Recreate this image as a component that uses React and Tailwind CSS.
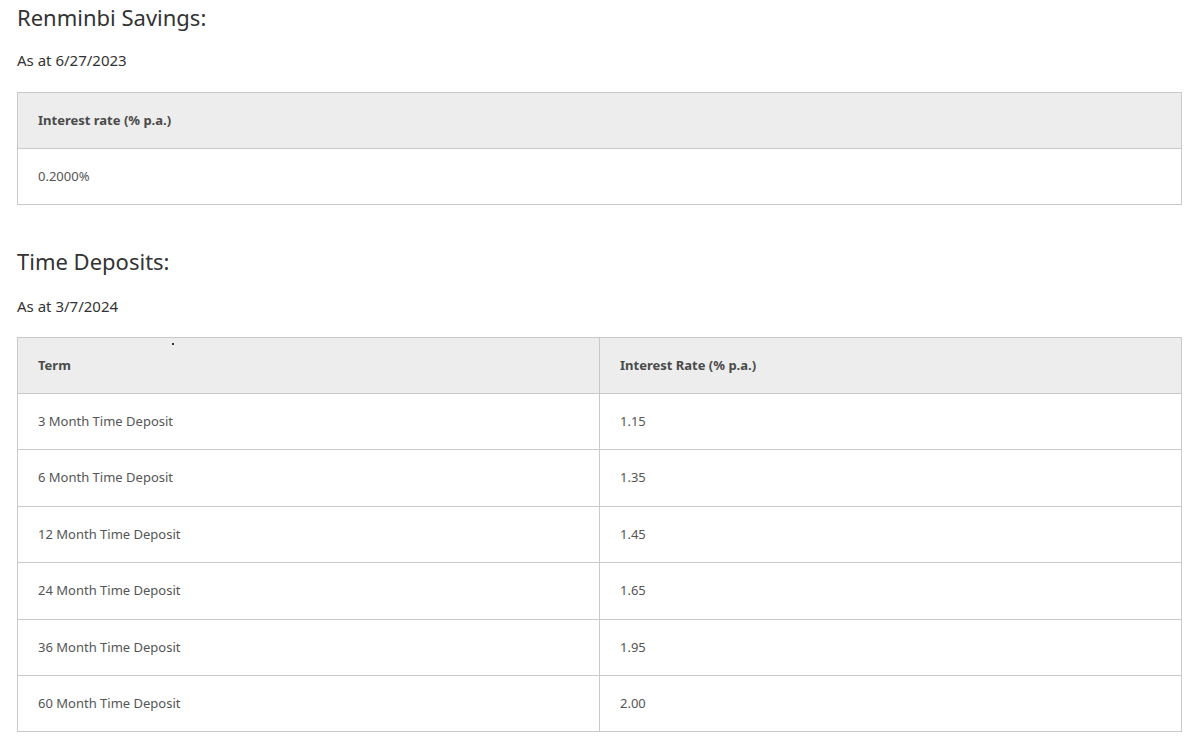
const terms = [
  ['3 Month Time Deposit', '1.15'],
  ['6 Month Time Deposit', '1.35'],
  ['12 Month Time Deposit', '1.45'],
  ['24 Month Time Deposit', '1.65'],
  ['36 Month Time Deposit', '1.95'],
  ['60 Month Time Deposit', '2.00'],
];

export default function App() {
  return (
    <div className="bg-white min-h-[738px] px-[17px] text-[#333] font-['Liberation_Sans']">
      {/* Renminbi Savings */}
      <h2 className="pt-[4px] text-[22px] leading-[26px] font-normal">Renminbi Savings:</h2>
      <p className="mt-[20px] text-[15px] leading-[20px]">As at 6/27/2023</p>
      <table className="mt-[22px] w-[1165px] border-collapse text-[13px]">
        <thead>
          <tr className="bg-[#ededed]">
            <th className="h-[56px] border border-[#c9c9c9] px-[20px] text-left font-bold text-[#4a4a4a]">Interest rate (% p.a.)</th>
          </tr>
        </thead>
        <tbody>
          <tr>
            <td className="h-[56px] border border-[#c9c9c9] px-[20px] text-[#555]">0.2000%</td>
          </tr>
        </tbody>
      </table>

      {/* Time Deposits */}
      <h2 className="mt-[43px] text-[22px] leading-[26px] font-normal">Time Deposits:</h2>
      <p className="mt-[22px] text-[15px] leading-[20px]">As at 3/7/2024</p>
      <table className="mt-[21px] w-[1165px] border-collapse text-[13px]">
        <thead>
          <tr className="bg-[#ededed]">
            <th className="relative w-[582px] h-[56px] border border-[#c9c9c9] px-[20px] text-left font-bold text-[#4a4a4a]">
              Term
              <span className="absolute left-[154px] top-[5px] w-[2px] h-[2px] bg-[#333]" />
            </th>
            <th className="h-[56px] border border-[#c9c9c9] px-[20px] text-left font-bold text-[#4a4a4a]">Interest Rate (% p.a.)</th>
          </tr>
        </thead>
        <tbody>
          {terms.map(([term, rate]) => (
            <tr key={term}>
              <td className="h-[56.4px] border border-[#c9c9c9] px-[20px] text-[#555]">{term}</td>
              <td className="h-[56.4px] border border-[#c9c9c9] px-[20px] text-[#555]">{rate}</td>
            </tr>
          ))}
        </tbody>
      </table>
    </div>
  );
}
